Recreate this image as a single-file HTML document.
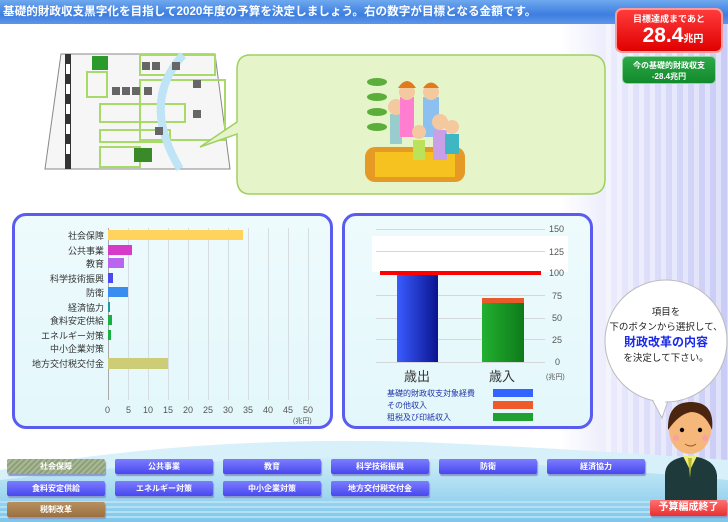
<!DOCTYPE html>
<html><head><meta charset="utf-8"><style>
*{margin:0;padding:0;box-sizing:border-box}
body{width:728px;height:522px;position:relative;overflow:hidden;font-family:"Liberation Sans","Noto Sans CJK JP",sans-serif;background:#fff}
.bgr{position:absolute;left:0;top:0;width:728px;height:522px;background:linear-gradient(90deg,#fff 0,#fff 560px,#dfe0fa 640px,#c8cbf6 728px)}
.stripes{position:absolute;left:600px;top:0;width:128px;height:522px;background:repeating-linear-gradient(90deg,rgba(255,255,255,.0) 0,rgba(255,255,255,0) 6px,rgba(255,255,255,.45) 6px,rgba(255,255,255,.45) 11px);opacity:.9}
.top{position:absolute;left:0;top:0;width:728px;height:24px;background:linear-gradient(#6fa8ef,#3d7ee0 60%,#5d95ea);color:#fff;font-size:11.6px;font-weight:bold;line-height:24px;padding-left:3px;white-space:nowrap}
.abs{position:absolute}
.panel{position:absolute;border:3px solid #5a5cf0;border-radius:14px;background:linear-gradient(#eefbfd,#e3f7fb)}
.lbl{position:absolute;font-size:9px;color:#333;text-align:right;width:100px;white-space:nowrap}
.bar{position:absolute;height:10px}
.tick{position:absolute;font-size:9px;color:#555}
.btn{position:absolute;height:15px;width:98px;border-radius:2px;background:linear-gradient(#7c7cff,#4848f0);box-shadow:1px 2px 1px #8a9ac8;color:#fff;font-size:8px;font-weight:bold;text-align:center;line-height:15px}
</style></head><body>
<div class="bgr"></div><div class="stripes"></div>
<svg class="abs" style="left:0;top:430px" width="728" height="92">
<defs><linearGradient id="w" x1="0" y1="0" x2="0" y2="1"><stop offset="0" stop-color="#cfeef8"/><stop offset="1" stop-color="#7ec6ea"/></linearGradient></defs>
<path d="M0 40 Q200 5 420 12 Q560 18 728 30 V92 H0Z" fill="#d7f0fa"/>
<path d="M0 50 Q250 20 460 30 Q600 38 728 50 V92 H0Z" fill="url(#w)"/>
<g stroke="#bfe6f7" stroke-width="1.5"><line x1="0" y1="72" x2="728" y2="72"/><line x1="0" y1="77" x2="728" y2="77"/><line x1="0" y1="82" x2="728" y2="82"/><line x1="0" y1="87" x2="728" y2="87"/></g>
</svg>
<div class="top">基礎的財政収支黒字化を目指して2020年度の予算を決定しましょう。右の数字が目標となる金額です。</div>
<div class="abs" style="left:615px;top:8px;width:108px;height:45px;border-radius:7px;background:linear-gradient(#ff3b3b,#e00000);border:2px solid #ff9a9a;color:#fff;text-align:center;font-weight:bold">
<div style="font-size:9px;margin-top:2px">目標達成まであと</div>
<div style="font-size:21px;line-height:22px;padding-left:8px">28.4<span style="font-size:10px">兆円</span></div></div>
<div class="abs" style="left:622px;top:56px;width:94px;height:28px;border-radius:5px;background:linear-gradient(#2fa84a,#108a2a);border:1px solid #8fd49c;color:#fff;text-align:center;font-weight:bold;font-size:8px;line-height:11px;padding-top:3px">今の基礎的財政収支<br>-28.4兆円</div>
<svg class="abs" style="left:40px;top:52px" width="200" height="120">
<path d="M21 2 H175 L190 117 H5Z" fill="#f6f6f6" stroke="#888"/>
<rect x="25" y="2" width="6" height="115" fill="#333"/><g fill="#fff"><rect x="26" y="12" width="4" height="10"/><rect x="26" y="32" width="4" height="10"/><rect x="26" y="52" width="4" height="10"/><rect x="26" y="72" width="4" height="10"/><rect x="26" y="92" width="4" height="10"/></g>
<g fill="none" stroke="#a8da6a" stroke-width="2"><rect x="47" y="20" width="20" height="25"/><rect x="60" y="52" width="85" height="18"/><rect x="60" y="78" width="70" height="12"/><rect x="60" y="95" width="40" height="20"/><rect x="100" y="3" width="75" height="20"/><rect x="100" y="28" width="85" height="60"/></g>
<path d="M143 3 Q100 50 140 117" fill="none" stroke="#bfe4f6" stroke-width="8"/>
<g fill="#666"><rect x="102" y="10" width="8" height="8"/><rect x="112" y="10" width="8" height="8"/><rect x="132" y="10" width="8" height="8"/><rect x="72" y="35" width="8" height="8"/><rect x="82" y="35" width="8" height="8"/><rect x="92" y="35" width="8" height="8"/><rect x="104" y="35" width="8" height="8"/><rect x="153" y="28" width="8" height="8"/><rect x="153" y="58" width="8" height="8"/><rect x="115" y="75" width="8" height="8"/></g>
<rect x="94" y="96" width="18" height="14" fill="#3a8a2a"/><rect x="52" y="4" width="16" height="14" fill="#2a9a2a"/>
</svg>
<svg class="abs" style="left:195px;top:52px" width="420" height="148">
<path d="M52 3 H395 Q410 3 410 18 V127 Q410 142 395 142 H55 Q42 142 42 127 V82 L5 95 L42 70 V18 Q42 3 55 3Z" fill="#e5f4c9" stroke="#9fd060" stroke-width="1.5"/>
<rect x="170" y="95" width="100" height="35" rx="10" fill="#e49a25"/><rect x="180" y="100" width="80" height="25" fill="#f6c21f"/>
<ellipse cx="182" cy="30" rx="10" ry="4" fill="#5cae3a"/><ellipse cx="182" cy="45" rx="10" ry="4" fill="#5cae3a"/><ellipse cx="182" cy="60" rx="10" ry="4" fill="#5cae3a"/><ellipse cx="182" cy="75" rx="10" ry="4" fill="#5cae3a"/>
<rect x="195" y="62" width="12" height="30" fill="#9cc"/><circle cx="201" cy="55" r="8" fill="#f5c9a0"/>
<rect x="205" y="45" width="14" height="40" fill="#ff7ed0"/><circle cx="212" cy="40" r="8" fill="#f5c9a0"/><path d="M203 36 Q212 22 221 36" fill="#e07a1a"/>
<rect x="228" y="45" width="16" height="40" fill="#8cc0f0"/><circle cx="236" cy="40" r="8" fill="#f5c9a0"/><path d="M228 36 Q236 25 244 36" fill="#e07a1a"/>
<rect x="238" y="78" width="14" height="30" fill="#c9a0e8"/><circle cx="245" cy="70" r="8" fill="#f5c9a0"/>
<rect x="218" y="88" width="12" height="20" fill="#bbe35a"/><circle cx="224" cy="80" r="7" fill="#f5c9a0"/>
<rect x="250" y="82" width="14" height="20" fill="#3fb6c4"/><circle cx="257" cy="75" r="7" fill="#f5c9a0"/>
</svg>
<div class="panel" style="left:12px;top:213px;width:321px;height:216px"></div>
<svg class="abs" style="left:0;top:0" width="340" height="430">
<g stroke="#d6dde0" stroke-width="1">
<line x1="128.5" y1="228" x2="128.5" y2="400"/><line x1="148.5" y1="228" x2="148.5" y2="400"/><line x1="168.5" y1="228" x2="168.5" y2="400"/><line x1="188.5" y1="228" x2="188.5" y2="400"/><line x1="208.5" y1="228" x2="208.5" y2="400"/><line x1="228.5" y1="228" x2="228.5" y2="400"/><line x1="248.5" y1="228" x2="248.5" y2="400"/><line x1="268.5" y1="228" x2="268.5" y2="400"/><line x1="288.5" y1="228" x2="288.5" y2="400"/><line x1="308.5" y1="228" x2="308.5" y2="400"/></g>
<line x1="108.5" y1="228" x2="108.5" y2="400" stroke="#aaa"/>
</svg>
<div class="bar" style="left:108px;top:230px;width:135px;background:#ffd35c"></div>
<div class="bar" style="left:108px;top:245px;width:24px;background:#d63ac8"></div>
<div class="bar" style="left:108px;top:258px;width:16px;background:#b965f0"></div>
<div class="bar" style="left:108px;top:273px;width:5px;background:#4a4af0"></div>
<div class="bar" style="left:108px;top:287px;width:20px;background:#3a8cf0"></div>
<div class="bar" style="left:108px;top:302px;width:2px;background:#1a9a9a"></div>
<div class="bar" style="left:108px;top:315px;width:4px;background:#18b040"></div>
<div class="bar" style="left:108px;top:330px;width:3px;background:#18b040"></div>
<div class="bar" style="left:108px;top:358px;width:60px;height:11px;background:#cdcd78"></div>
<div class="lbl" style="left:4px;top:229px">社会保障</div>
<div class="lbl" style="left:4px;top:244px">公共事業</div>
<div class="lbl" style="left:4px;top:257px">教育</div>
<div class="lbl" style="left:4px;top:272px">科学技術振興</div>
<div class="lbl" style="left:4px;top:286px">防衛</div>
<div class="lbl" style="left:4px;top:301px">経済協力</div>
<div class="lbl" style="left:4px;top:314px">食料安定供給</div>
<div class="lbl" style="left:4px;top:329px">エネルギー対策</div>
<div class="lbl" style="left:4px;top:342px">中小企業対策</div>
<div class="lbl" style="left:4px;top:357px">地方交付税交付金</div>
<div class="tick" style="left:105px;top:405px">0</div><div class="tick" style="left:126px;top:405px">5</div><div class="tick" style="left:143px;top:405px">10</div><div class="tick" style="left:163px;top:405px">15</div><div class="tick" style="left:183px;top:405px">20</div><div class="tick" style="left:203px;top:405px">25</div><div class="tick" style="left:223px;top:405px">30</div><div class="tick" style="left:243px;top:405px">35</div><div class="tick" style="left:263px;top:405px">40</div><div class="tick" style="left:283px;top:405px">45</div><div class="tick" style="left:303px;top:405px">50</div>
<div class="tick" style="left:293px;top:416px;font-size:7px">(兆円)</div>
<div class="panel" style="left:342px;top:213px;width:251px;height:216px"></div>
<div class="abs" style="left:372px;top:236px;width:196px;height:36px;background:#fff"></div>
<svg class="abs" style="left:0;top:0" width="600" height="430">
<g stroke="#d4d8da"><line x1="376" y1="229.5" x2="545" y2="229.5"/><line x1="376" y1="251.5" x2="545" y2="251.5"/><line x1="376" y1="295.5" x2="545" y2="295.5"/><line x1="376" y1="318.5" x2="545" y2="318.5"/><line x1="376" y1="339.5" x2="545" y2="339.5"/><line x1="376" y1="362.5" x2="545" y2="362.5"/></g>
<defs><linearGradient id="b" x1="0" x2="1"><stop offset="0" stop-color="#3a5cff"/><stop offset="1" stop-color="#0a1490"/></linearGradient><linearGradient id="g" x1="0" x2="1"><stop offset="0" stop-color="#22b030"/><stop offset="1" stop-color="#0e7a1a"/></linearGradient></defs>
<rect x="397" y="274" width="41" height="88" fill="url(#b)"/>
<rect x="482" y="302" width="42" height="60" fill="url(#g)"/>
<rect x="482" y="298" width="42" height="5" fill="#e85a2a"/>
<rect x="380" y="271" width="161" height="4" fill="#ff0000"/>
</svg>
<div class="tick" style="left:549px;top:224px">150</div><div class="tick" style="left:549px;top:247px">125</div><div class="tick" style="left:549px;top:268px">100</div><div class="tick" style="left:552px;top:291px">75</div><div class="tick" style="left:552px;top:313px">50</div><div class="tick" style="left:552px;top:335px">25</div><div class="tick" style="left:555px;top:357px">0</div>
<div class="tick" style="left:546px;top:372px;font-size:7px">(兆円)</div>
<div class="abs" style="left:404px;top:366px;font-size:13px;color:#333">歳出</div>
<div class="abs" style="left:489px;top:366px;font-size:13px;color:#333">歳入</div>
<div class="abs" style="left:387px;top:388px;font-size:8px;line-height:12px;color:#2233aa">基礎的財政収支対象経費<br>その他収入<br>租税及び印紙収入</div>
<div class="abs" style="left:493px;top:389px;width:40px;height:8px;background:#3464ff"></div>
<div class="abs" style="left:493px;top:401px;width:40px;height:8px;background:#f05a2a"></div>
<div class="abs" style="left:493px;top:413px;width:40px;height:8px;background:#20a030"></div>
<svg class="abs" style="left:595px;top:270px" width="133" height="155">
<path d="M52 120 L67 148 L74 128Z" fill="#fff" stroke="#bbb"/>
<circle cx="71" cy="71" r="61" fill="#fff" stroke="#bbb"/>
<path d="M54 122 L66 145 L72 126Z" fill="#fff"/>
</svg>
<div class="abs" style="left:596px;top:305px;width:140px;text-align:center;font-size:9.5px;line-height:15px;color:#222">項目を<br>下のボタンから選択して、<br><span style="color:#1a2ae8;font-weight:bold;font-size:12px">財政改革の内容</span><br>を決定して下さい。</div>
<svg class="abs" style="left:655px;top:400px" width="73" height="100">
<path d="M10 100 V75 Q10 58 35 56 Q60 58 62 75 V100Z" fill="#1f3a3a"/>
<path d="M28 56 L35 70 L42 56Z" fill="#eef07a"/><path d="M33 58 L35 78 L37 58Z" fill="#b8b830"/>
<ellipse cx="35" cy="30" rx="21" ry="24" fill="#f5b77a"/>
<path d="M13 30 Q12 2 36 2 Q60 2 57 30 Q50 12 36 12 Q24 14 13 30Z" fill="#4a2510"/>
<circle cx="27" cy="30" r="2.2" fill="#000"/><circle cx="45" cy="30" r="2.2" fill="#000"/>
<circle cx="21" cy="38" r="3" fill="#f8a0a8"/><circle cx="50" cy="38" r="3" fill="#f8a0a8"/>
<path d="M30 44 Q36 48 41 44" stroke="#a05020" fill="none"/>
</svg>
<div class="btn" style="left:7px;top:459px;background:repeating-linear-gradient(135deg,#8ea07a 0,#8ea07a 2px,#a8b894 2px,#a8b894 4px)">社会保障</div>
<div class="btn" style="left:115px;top:459px">公共事業</div>
<div class="btn" style="left:223px;top:459px">教育</div>
<div class="btn" style="left:331px;top:459px">科学技術振興</div>
<div class="btn" style="left:439px;top:459px">防衛</div>
<div class="btn" style="left:547px;top:459px">経済協力</div>
<div class="btn" style="left:7px;top:481px">食料安定供給</div>
<div class="btn" style="left:115px;top:481px">エネルギー対策</div>
<div class="btn" style="left:223px;top:481px">中小企業対策</div>
<div class="btn" style="left:331px;top:481px">地方交付税交付金</div>
<div class="btn" style="left:7px;top:502px;background:linear-gradient(#b89060,#9a7040)">税制改革</div>
<div class="btn" style="left:650px;top:500px;width:77px;height:16px;background:linear-gradient(#ff7070,#e83030);font-size:10px">予算編成終了</div>
</body></html>
